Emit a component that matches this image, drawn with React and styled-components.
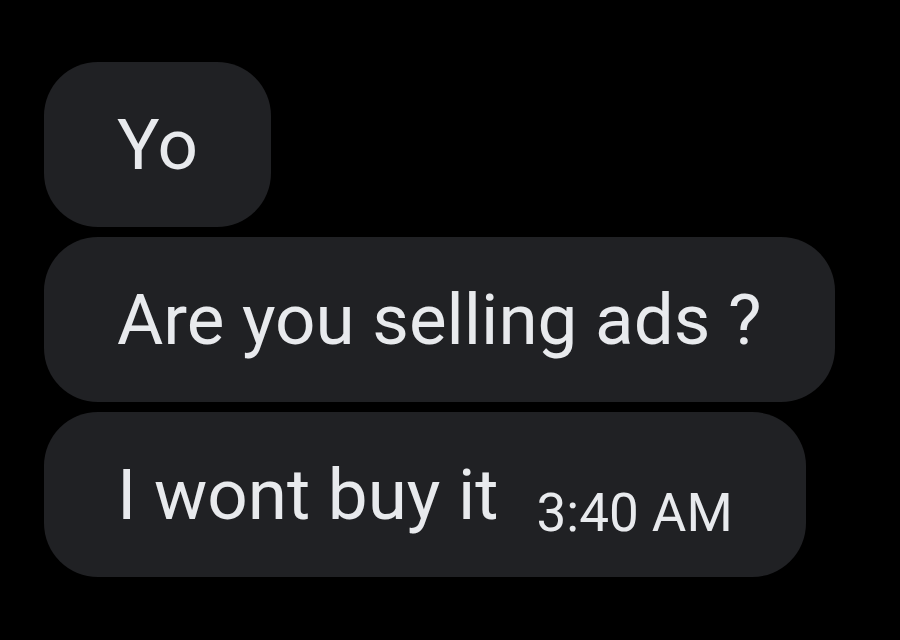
import styled, { createGlobalStyle } from 'styled-components'

const GlobalStyle = createGlobalStyle`
  html, body {
    margin: 0;
    padding: 0;
    background: #000;
  }
  body {
    font-family: Roboto, "Liberation Sans", sans-serif;
  }
`

const MESSAGES = [
  { id: 1, text: 'Yo' },
  { id: 2, text: 'Are you selling ads ?' },
  { id: 3, text: 'I wont buy it', time: '3:40 AM' },
]

const App = () => {
  return <Wrapper>
    <GlobalStyle />
    {MESSAGES.map((msg) => <Bubble key={msg.id}>
      <Text>{msg.text}</Text>
      {msg.time && <Time>{msg.time}</Time>}
    </Bubble>)}
  </Wrapper>
}
export default App


const Wrapper = styled.div`
  width: 900px;
  height: 640px;
  box-sizing: border-box;
  padding: 62px 0 0 44px;
  display: flex;
  flex-direction: column;
  align-items: flex-start;
  gap: 10px;
  background-color: #000;
`

const Bubble = styled.div`
  height: 165px;
  box-sizing: border-box;
  padding: 0 73px 0 73px;
  display: flex;
  align-items: baseline;
  border-radius: 54px;
  background-color: #202124;
  color: #e8eaed;
`

const Text = styled.span`
  font-size: 71px;
  line-height: 165px;
`

const Time = styled.span`
  font-size: 53px;
  margin-left: 38px;
  position: relative;
  top: 12px;
`
